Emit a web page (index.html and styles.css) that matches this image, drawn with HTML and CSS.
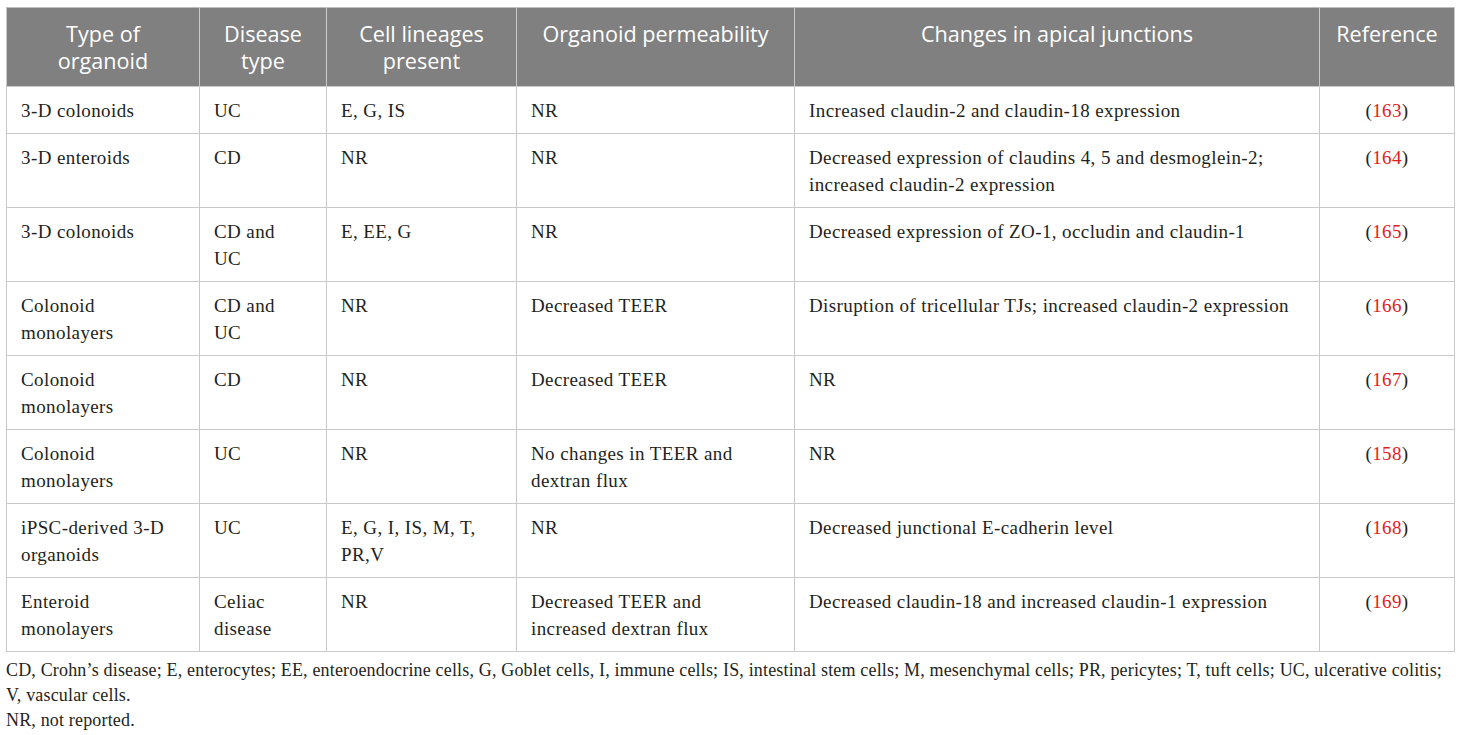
FILE: index.html
```html
<!DOCTYPE html>
<html lang="en">
<head>
<meta charset="utf-8">
<title>Organoid table</title>
<link rel="stylesheet" href="styles.css">
</head>
<body>
<div class="wrap">
<table class="data">
  <colgroup>
    <col class="c1"><col class="c2"><col class="c3"><col class="c4"><col class="c5"><col class="c6">
  </colgroup>
  <thead>
    <tr>
      <th>Type of<br>organoid</th>
      <th>Disease<br>type</th>
      <th>Cell lineages<br>present</th>
      <th>Organoid permeability</th>
      <th>Changes in apical junctions</th>
      <th>Reference</th>
    </tr>
  </thead>
  <tbody>
    <tr><td>3-D colonoids</td><td>UC</td><td>E, G, IS</td><td>NR</td><td>Increased claudin-2 and claudin-18 expression</td><td class="ref">(<span>163</span>)</td></tr>
    <tr><td>3-D enteroids</td><td>CD</td><td>NR</td><td>NR</td><td>Decreased expression of claudins 4, 5 and desmoglein-2;<br>increased claudin-2 expression</td><td class="ref">(<span>164</span>)</td></tr>
    <tr><td>3-D colonoids</td><td>CD and<br>UC</td><td>E, EE, G</td><td>NR</td><td>Decreased expression of ZO-1, occludin and claudin-1</td><td class="ref">(<span>165</span>)</td></tr>
    <tr><td>Colonoid<br>monolayers</td><td>CD and<br>UC</td><td>NR</td><td>Decreased TEER</td><td>Disruption of tricellular TJs; increased claudin-2 expression</td><td class="ref">(<span>166</span>)</td></tr>
    <tr><td>Colonoid<br>monolayers</td><td>CD</td><td>NR</td><td>Decreased TEER</td><td>NR</td><td class="ref">(<span>167</span>)</td></tr>
    <tr><td>Colonoid<br>monolayers</td><td>UC</td><td>NR</td><td>No changes in TEER and<br>dextran flux</td><td>NR</td><td class="ref">(<span>158</span>)</td></tr>
    <tr><td>iPSC-derived 3-D<br>organoids</td><td>UC</td><td>E, G, I, IS, M, T,<br>PR,V</td><td>NR</td><td>Decreased junctional E-cadherin level</td><td class="ref">(<span>168</span>)</td></tr>
    <tr><td>Enteroid<br>monolayers</td><td>Celiac<br>disease</td><td>NR</td><td>Decreased TEER and<br>increased dextran flux</td><td>Decreased claudin-18 and increased claudin-1 expression</td><td class="ref">(<span>169</span>)</td></tr>
  </tbody>
</table>
<div class="notes">
  <p>CD, Crohn’s disease; E, enterocytes; EE, enteroendocrine cells, G, Goblet cells, I, immune cells; IS, intestinal stem cells; M, mesenchymal cells; PR, pericytes; T, tuft cells; UC, ulcerative colitis;<br>V, vascular cells.</p>
  <p>NR, not reported.</p>
</div>
</div>
</body>
</html>
```

FILE: styles.css
```css
html, body {
  margin: 0;
  padding: 0;
  background: #ffffff;
}
.wrap {
  padding: 7px 7px 0 6px;
}
.data {
  border-collapse: collapse;
  width: 1448px;
  table-layout: fixed;
  font-family: "Liberation Serif", "Times New Roman", serif;
  font-size: 19px;
  letter-spacing: 0.4px;
  color: #231f20;
}
.c1 { width: 193px; }
.c2 { width: 127px; }
.c3 { width: 190px; }
.c4 { width: 278px; }
.c5 { width: 525px; }
.c6 { width: 135px; }
.data th {
  background: #808080;
  color: #ffffff;
  font-family: "Open Sans", "Noto Sans", sans-serif;
  font-weight: 400;
  font-size: 21.6px;
  letter-spacing: 0;
  line-height: 27px;
  padding: 12px 6px 12px;
  text-align: center;
  vertical-align: top;
  border: 1px solid #c9c9c9;
  border-top-color: #bdbdbd;
}
.data td {
  border: 1px solid #c9c9c9;
  padding: 10px 10px 9px 14px;
  line-height: 27px;
  vertical-align: top;
  text-align: left;
  white-space: nowrap;
}
.data td.ref {
  text-align: center;
  padding-left: 10px;
}
.ref span {
  color: #e31b23;
}
.notes {
  font-family: "Liberation Serif", "Times New Roman", serif;
  font-size: 18px;
  letter-spacing: 0.17px;
  color: #231f20;
  line-height: 25px;
  padding-top: 6px;
  white-space: nowrap;
}
.notes p {
  margin: 0;
}
```
